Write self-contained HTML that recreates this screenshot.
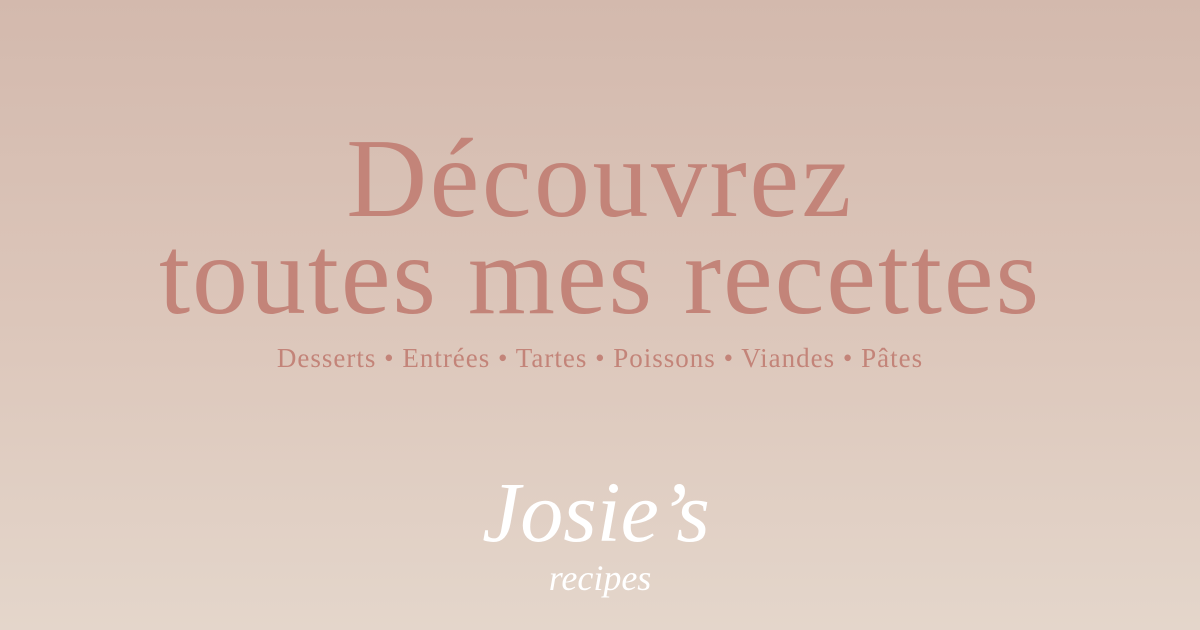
<!DOCTYPE html>
<html><head><meta charset="utf-8"><style>
html,body{margin:0;padding:0}
body{width:1200px;height:630px;overflow:hidden;background:linear-gradient(180deg,#d3b9ad 0%,#dcc6ba 50%,#e4d6cb 100%);font-family:"Liberation Serif",serif;color:#c38479;position:relative}
.t{position:absolute;left:0;width:1200px;text-align:center;white-space:nowrap}
#l1{top:119px;font-size:112px;line-height:120px;letter-spacing:2.5px}
#l2{top:216px;font-size:112px;line-height:120px;letter-spacing:1.9px}
#sub{top:343px;font-size:27px;line-height:30px;letter-spacing:1px}
#j{top:462px;font-size:86px;line-height:100px;color:#fff;font-style:italic;left:-4px}
#r{top:558px;font-size:36px;line-height:40px;color:#fff;font-style:italic;left:0}
</style></head><body>
<div class="t" id="l1">Découvrez</div>
<div class="t" id="l2">toutes mes recettes</div>
<div class="t" id="sub">Desserts • Entrées • Tartes • Poissons • Viandes • Pâtes</div>
<div class="t" id="j">Josie’s</div>
<div class="t" id="r">recipes</div>
</body></html>
